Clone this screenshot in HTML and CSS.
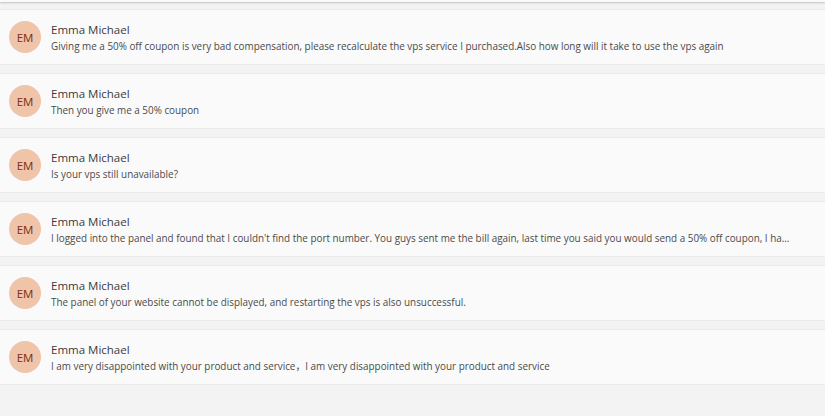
FILE: index.html
```html
<!DOCTYPE html>
<html>
<head>
<meta charset="utf-8">
<link rel="stylesheet" href="styles.css">
</head>
<body>
<div class="topbar"></div>
<div class="list">
  <div class="item">
    <div class="avatar">EM</div>
    <div class="body">
      <div class="name">Emma Michael</div>
      <div class="msg">Giving me a 50% off coupon is very bad compensation, please recalculate the vps service I purchased.Also how long will it take to use the vps again</div>
    </div>
  </div>
  <div class="item">
    <div class="avatar">EM</div>
    <div class="body">
      <div class="name">Emma Michael</div>
      <div class="msg">Then you give me a 50% coupon</div>
    </div>
  </div>
  <div class="item">
    <div class="avatar">EM</div>
    <div class="body">
      <div class="name">Emma Michael</div>
      <div class="msg">Is your vps still unavailable?</div>
    </div>
  </div>
  <div class="item">
    <div class="avatar">EM</div>
    <div class="body">
      <div class="name">Emma Michael</div>
      <div class="msg">I logged into the panel and found that I couldn't find the port number. You guys sent me the bill again, last time you said you would send a 50% off coupon, I ha...</div>
    </div>
  </div>
  <div class="item">
    <div class="avatar">EM</div>
    <div class="body">
      <div class="name">Emma Michael</div>
      <div class="msg">The panel of your website cannot be displayed, and restarting the vps is also unsuccessful.</div>
    </div>
  </div>
  <div class="item">
    <div class="avatar">EM</div>
    <div class="body">
      <div class="name">Emma Michael</div>
      <div class="msg">I am very disappointed with your product and service，I am very disappointed with your product and service</div>
    </div>
  </div>
</div>
</body>
</html>
```
FILE: styles.css
```css
html, body {
  margin: 0;
  padding: 0;
  background: #f3f3f3;
  font-family: "Open Sans", "Noto Sans CJK SC", sans-serif;
}
.topbar {
  height: 2px;
  background: #fafafa;
  box-shadow: 0 1px 2px rgba(0,0,0,0.22);
}
.list {
  display: flex;
  flex-direction: column;
  gap: 8px;
  padding-top: 7px;
}
.item {
  box-sizing: border-box;
  height: 56px;
  background: #fafafa;
  border-top: 1px solid #ebebeb;
  border-bottom: 1px solid #ebebeb;
  display: flex;
  align-items: center;
  padding: 0 20px 0 9px;
  gap: 10px;
}
.avatar {
  flex: none;
  width: 32px;
  height: 32px;
  border-radius: 50%;
  background: #efc4a8;
  color: #7a2e12;
  font-size: 11.5px;
  display: flex;
  align-items: center;
  justify-content: center;
}
.body {
  min-width: 0;
  flex: 1;
  margin-top: 1px;
}
.name {
  font-size: 11.5px;
  color: #3a3a3a;
  line-height: 16px;
}
.msg {
  font-size: 9.9px;
  color: #4a4a4a;
  line-height: 16px;
  white-space: nowrap;
}
```
